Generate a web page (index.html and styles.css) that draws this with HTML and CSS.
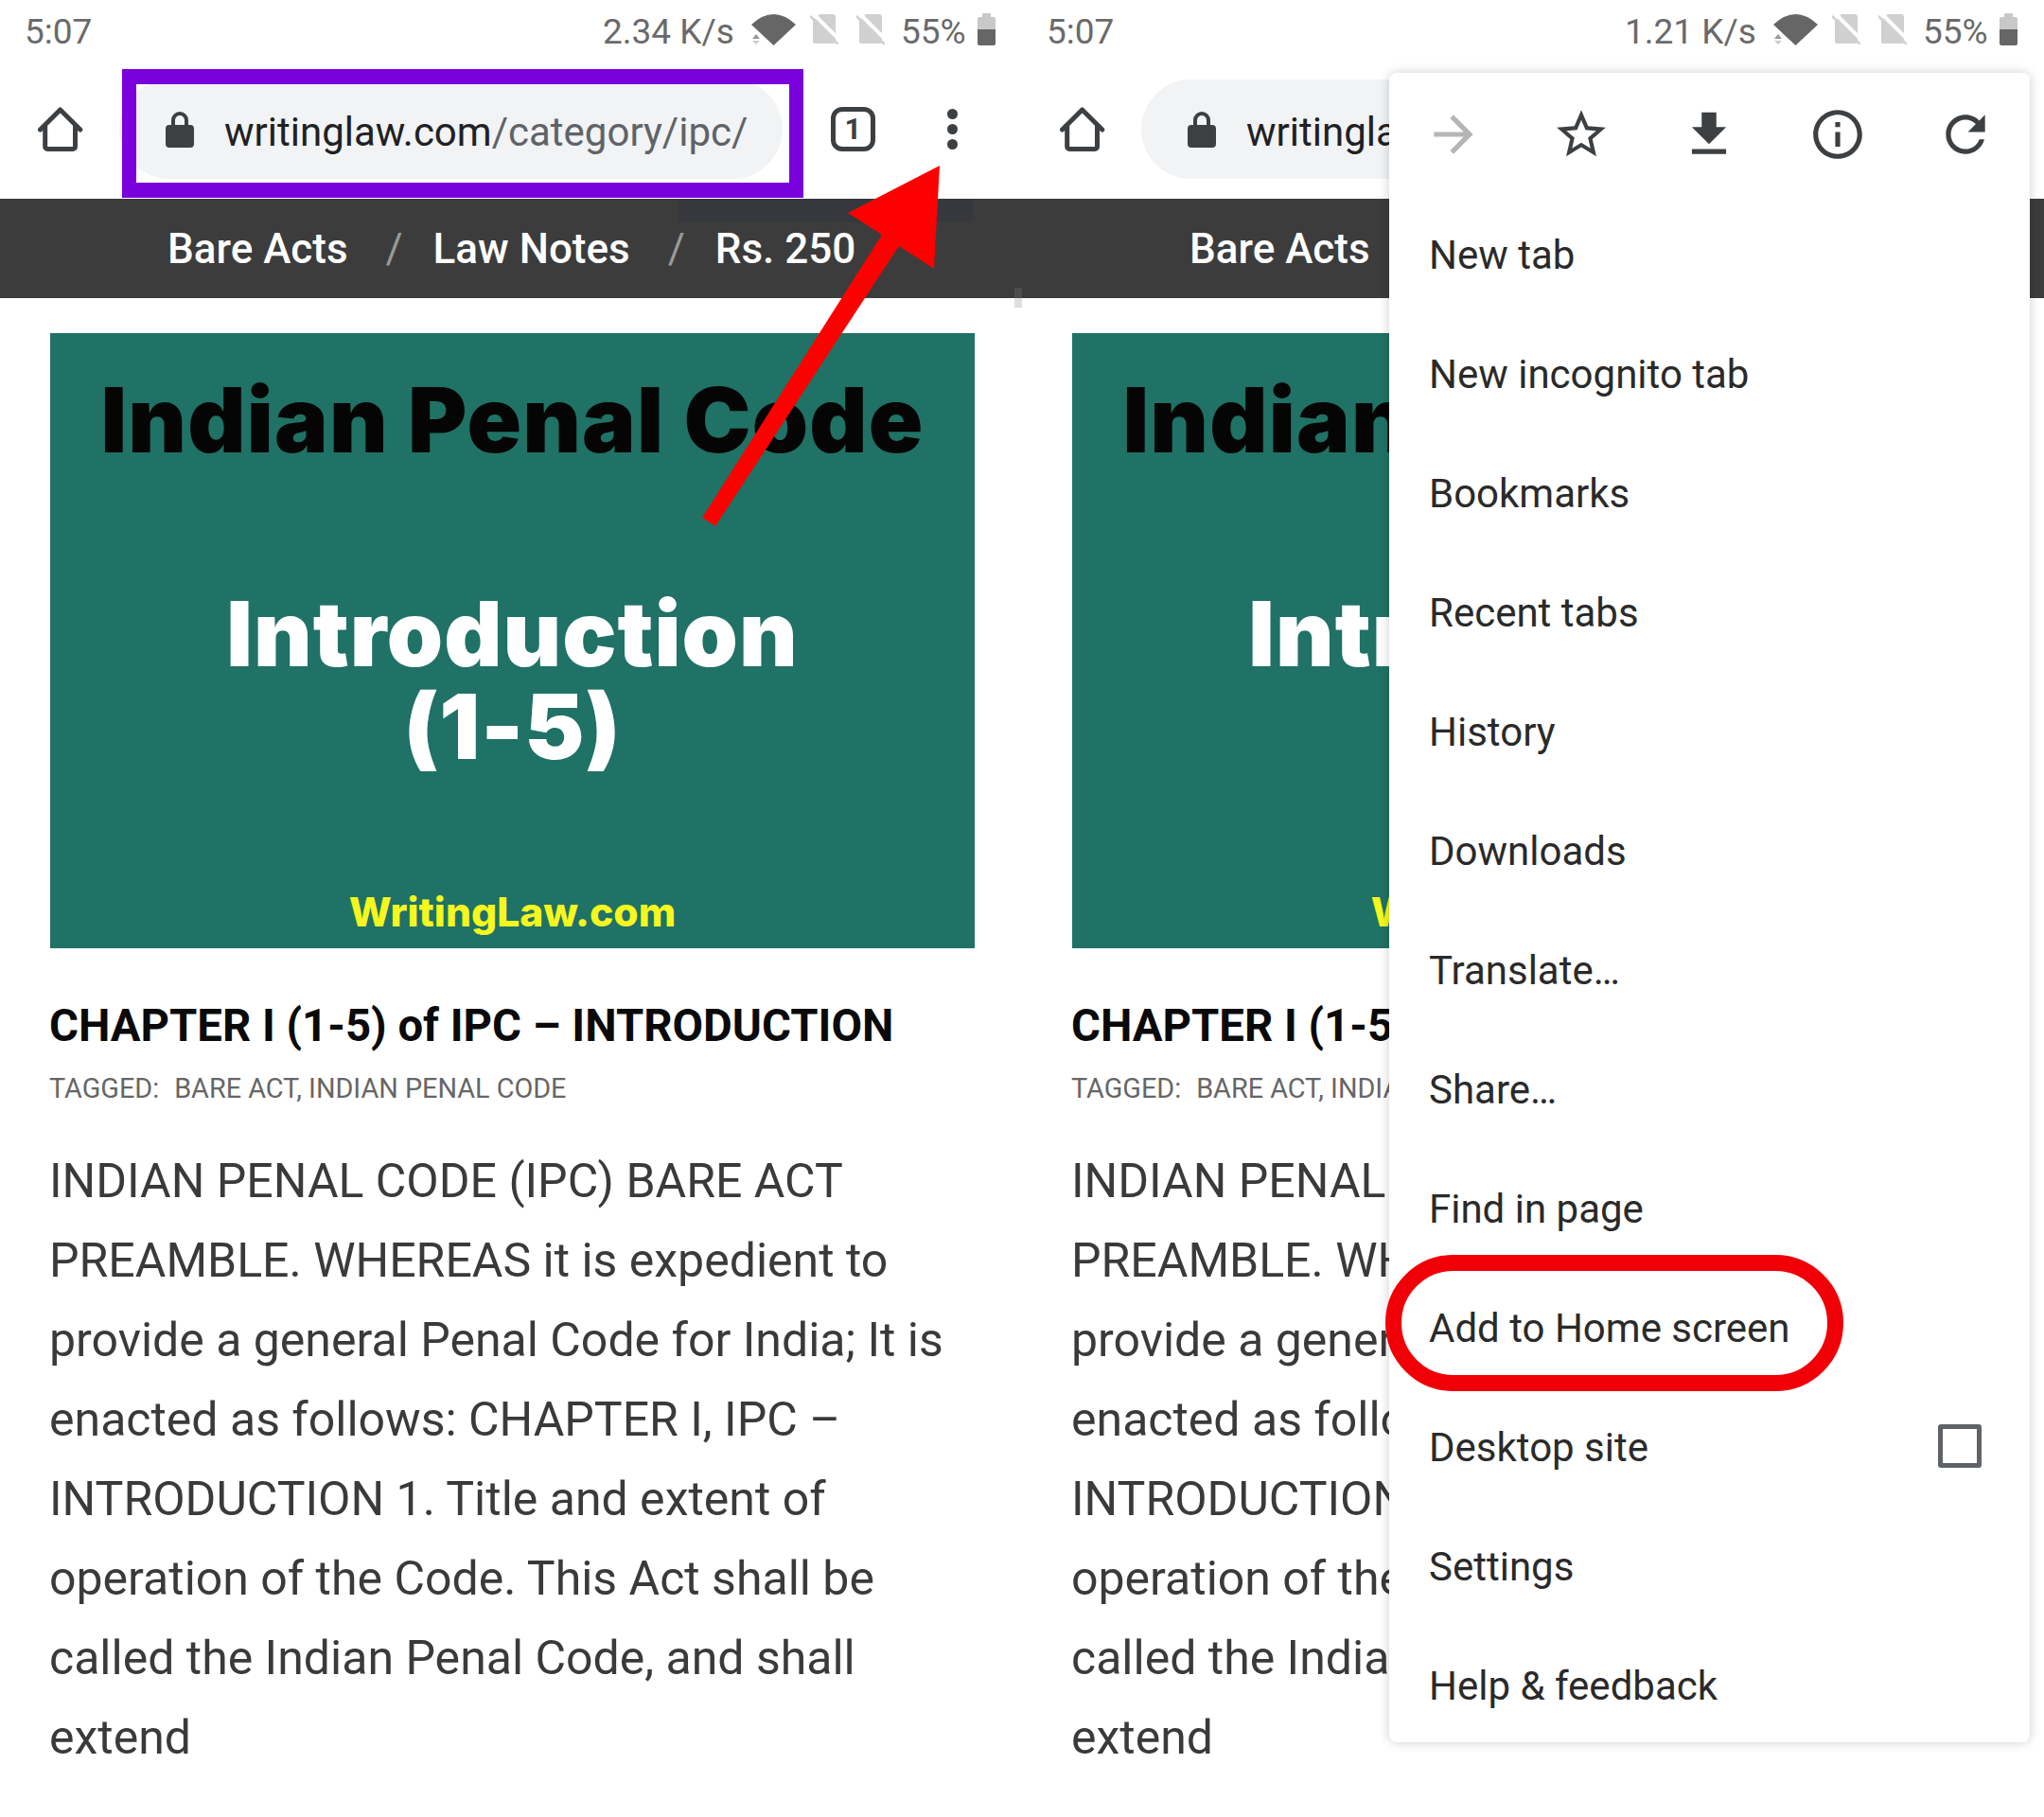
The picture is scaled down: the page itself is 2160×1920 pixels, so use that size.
FILE: index.html
```html
<!DOCTYPE html>
<html lang="en">
<head>
<meta charset="utf-8">
<title>Add to Home screen</title>
<link rel="stylesheet" href="styles.css">
</head>
<body>
<main class="page">
  <section class="screen">
    <header class="status">
      <span class="clock">5:07</span>
      <span class="speed">2.34 K/s</span>
      <svg class="wifi" viewBox="0 0 47 33"><path class="up" d="M5 21l4 5H1z"/><path class="down" d="M1 28h8l-4 4z"/><path d="M0 11Q23.5-11 47 11L23.5 33z"/></svg>
      <svg class="sim" viewBox="0 0 30 32"><path class="simbody" d="M10 0h14a3 3 0 0 1 3 3v26a2 2 0 0 1-2 2H5a2 2 0 0 1-2-2V7z"/><path class="slash-gap" d="M3-1l30 30"/><path class="slash" d="M0 2l30 30"/></svg>
      <svg class="sim" viewBox="0 0 30 32"><path class="simbody" d="M10 0h14a3 3 0 0 1 3 3v26a2 2 0 0 1-2 2H5a2 2 0 0 1-2-2V7z"/><path class="slash-gap" d="M3-1l30 30"/><path class="slash" d="M0 2l30 30"/></svg>
      <span class="pct">55%</span>
      <span class="battery"><i class="battery-cap"></i><i class="battery-top"></i><i class="battery-fill"></i></span>
    </header>
    <div class="toolbar">
      <svg class="home" viewBox="0 0 48 48"><path d="M2.5 24L23.6 3l21.2 21M7.7 19v23a2.5 2.5 0 0 0 2.5 2.5H37a2.5 2.5 0 0 0 2.5-2.5V19"/></svg>
      <div class="pill">
        <svg class="lock" viewBox="0 0 30 38"><path d="M6 14V9a9 9 0 0 1 18 0v5h2a4 4 0 0 1 4 4v16a4 4 0 0 1-4 4H4a4 4 0 0 1-4-4V18a4 4 0 0 1 4-4zm4 0h10V9a5 5 0 0 0-10 0z"/></svg>
        <span class="url"><b class="host">writinglaw.com</b>/category/ipc/</span>
      </div>
      <span class="tabs">1</span>
      <span class="dots"><i></i><i></i><i></i></span>
    </div>
    <nav class="nav">
      <span>Bare Acts</span><em>/</em><span>Law Notes</span><em>/</em><span>Rs. 250</span>
    </nav>
    <article class="post">
      <div class="thumb">
        <h2 class="thumb-title">Indian Penal Code</h2>
        <p class="thumb-intro">Introduction<br>(1-5)</p>
        <p class="thumb-site">WritingLaw.com</p>
      </div>
      <h1 class="title">CHAPTER I (1-5) of IPC – INTRODUCTION</h1>
      <p class="tags"><span class="tag-label">TAGGED:</span>BARE ACT, INDIAN PENAL CODE</p>
      <p class="excerpt">INDIAN PENAL CODE (IPC) BARE ACT PREAMBLE. WHEREAS it is expedient to provide a general Penal Code for India; It is enacted as follows: CHAPTER I, IPC – INTRODUCTION 1. Title and extent of operation of the Code. This Act shall be called the Indian Penal Code, and shall extend</p>
    </article>
  </section>

  <section class="screen">
    <header class="status">
      <span class="clock">5:07</span>
      <span class="speed">1.21 K/s</span>
      <svg class="wifi" viewBox="0 0 47 33"><path class="up" d="M5 21l4 5H1z"/><path class="down" d="M1 28h8l-4 4z"/><path d="M0 11Q23.5-11 47 11L23.5 33z"/></svg>
      <svg class="sim" viewBox="0 0 30 32"><path class="simbody" d="M10 0h14a3 3 0 0 1 3 3v26a2 2 0 0 1-2 2H5a2 2 0 0 1-2-2V7z"/><path class="slash-gap" d="M3-1l30 30"/><path class="slash" d="M0 2l30 30"/></svg>
      <svg class="sim" viewBox="0 0 30 32"><path class="simbody" d="M10 0h14a3 3 0 0 1 3 3v26a2 2 0 0 1-2 2H5a2 2 0 0 1-2-2V7z"/><path class="slash-gap" d="M3-1l30 30"/><path class="slash" d="M0 2l30 30"/></svg>
      <span class="pct">55%</span>
      <span class="battery"><i class="battery-cap"></i><i class="battery-top"></i><i class="battery-fill"></i></span>
    </header>
    <div class="toolbar">
      <svg class="home" viewBox="0 0 48 48"><path d="M2.5 24L23.6 3l21.2 21M7.7 19v23a2.5 2.5 0 0 0 2.5 2.5H37a2.5 2.5 0 0 0 2.5-2.5V19"/></svg>
      <div class="pill">
        <svg class="lock" viewBox="0 0 30 38"><path d="M6 14V9a9 9 0 0 1 18 0v5h2a4 4 0 0 1 4 4v16a4 4 0 0 1-4 4H4a4 4 0 0 1-4-4V18a4 4 0 0 1 4-4zm4 0h10V9a5 5 0 0 0-10 0z"/></svg>
        <span class="url"><b class="host">writinglaw.com</b>/category/ipc/</span>
      </div>
    </div>
    <nav class="nav">
      <span>Bare Acts</span><em>/</em><span>Law Notes</span><em>/</em><span>Rs. 250</span>
    </nav>
    <article class="post">
      <div class="thumb">
        <h2 class="thumb-title">Indian Penal Code</h2>
        <p class="thumb-intro">Introduction<br>(1-5)</p>
        <p class="thumb-site">WritingLaw.com</p>
      </div>
      <h1 class="title">CHAPTER I (1-5) of IPC – INTRODUCTION</h1>
      <p class="tags"><span class="tag-label">TAGGED:</span>BARE ACT, INDIAN PENAL CODE</p>
      <p class="excerpt">INDIAN PENAL CODE (IPC) BARE ACT PREAMBLE. WHEREAS it is expedient to provide a general Penal Code for India; It is enacted as follows: CHAPTER I, IPC – INTRODUCTION 1. Title and extent of operation of the Code. This Act shall be called the Indian Penal Code, and shall extend</p>
    </article>

    <aside class="menu">
      <div class="menu-icons">
        <svg class="mi mi-off" viewBox="0 0 24 24"><path d="M12 4l-1.41 1.41L16.17 11H4v2h12.17l-5.58 5.59L12 20l8-8z"/></svg>
        <svg class="mi" viewBox="0 0 24 24"><path d="M22 9.24l-7.19-.62L12 2 9.19 8.63 2 9.24l5.46 4.73L5.82 21 12 17.27 18.18 21l-1.63-7.03L22 9.24zM12 15.4l-3.76 2.27 1-4.28-3.32-2.88 4.38-.38L12 6.1l1.71 4.04 4.38.38-3.32 2.88 1 4.28L12 15.4z"/></svg>
        <svg class="mi" viewBox="0 0 24 24"><path d="M19 9h-4V3H9v6H5l7 7 7-7zM5 18v2h14v-2H5z"/></svg>
        <svg class="mi" viewBox="0 0 24 24"><path d="M11 7h2v2h-2zm0 4h2v6h-2zm1-9C6.48 2 2 6.48 2 12s4.48 10 10 10 10-4.48 10-10S17.52 2 12 2zm0 18c-4.41 0-8-3.59-8-8s3.59-8 8-8 8 3.59 8 8-3.59 8-8 8z"/></svg>
        <svg class="mi" viewBox="0 0 24 24"><path d="M17.65 6.35C16.2 4.9 14.21 4 12 4c-4.42 0-7.99 3.58-7.99 8s3.57 8 7.99 8c3.73 0 6.84-2.55 7.73-6h-2.08c-.82 2.33-3.04 4-5.65 4-3.31 0-6-2.69-6-6s2.69-6 6-6c1.66 0 3.14.69 4.22 1.78L13 11h7V4l-2.35 2.35z"/></svg>
      </div>
      <ul class="menu-list">
        <li>New tab</li>
        <li>New incognito tab</li>
        <li>Bookmarks</li>
        <li>Recent tabs</li>
        <li>History</li>
        <li>Downloads</li>
        <li>Translate…</li>
        <li>Share…</li>
        <li>Find in page</li>
        <li>Add to Home screen</li>
        <li>Desktop site<span class="check"></span></li>
        <li>Settings</li>
        <li>Help &amp; feedback</li>
      </ul>
    </aside>
  </section>

  <div class="smudge"></div>
  <div class="scroll-mark"></div>
  <div class="box-mark"></div>
  <div class="ring-mark"></div>
  <svg class="arrow-mark" viewBox="0 0 2160 1920"><polygon points="993,175 896,225 932,248 742,547 756,556 950,260 987,284"/></svg>
</main>
</body>
</html>
```

FILE: styles.css
```css
* { box-sizing: border-box; }
html, body { margin: 0; background: #fff; }
body { font-family: Roboto, "Liberation Sans", sans-serif; color: #3c3c3c; }

.page { position: relative; display: flex; width: 2160px; height: 1920px; overflow: hidden; background: #fff; }
.screen { position: relative; width: 1080px; height: 1920px; overflow: hidden; flex: none; }

/* status bar */
.status { display: flex; align-items: center; height: 66px; padding: 0 26px; color: #6a6a6a; font-size: 37px; }
.clock { width: 611px; flex: none; }
.speed { width: 142px; flex: none; white-space: nowrap; }
.wifi { width: 47px; height: 33px; margin: 0 0 4px 15px; fill: #666; flex: none; }
.wifi .up { fill: #999; }
.wifi .down { fill: #ccc; }
.sim { width: 30px; height: 32px; margin: 0 0 4px 15px; flex: none; }
.sim + .sim { margin-left: 19px; }
.simbody { fill: #d0d0d0; }
.slash-gap { stroke: #fff; stroke-width: 4; fill: none; }
.slash { stroke: #d0d0d0; stroke-width: 2.5; fill: none; }
.pct { margin-left: 17px; width: 68px; flex: none; }
.battery { display: flex; flex-direction: column; align-items: center; flex: none; width: 19px; height: 34px; margin: 0 0 4px 13px; }
.battery i { display: block; flex: none; }
.battery-cap { width: 9px; height: 4px; background: #c8c8c8; border-radius: 1px 1px 0 0; }
.battery-top { width: 19px; height: 13px; background: #c8c8c8; border-radius: 2px 2px 0 0; }
.battery-fill { width: 19px; height: 17px; background: #666; border-radius: 0 0 2px 2px; }

/* toolbar */
.toolbar { display: flex; align-items: center; height: 144px; padding: 0 0 3px 40px; }
.home { width: 48px; height: 48px; fill: none; stroke: #3c4043; stroke-width: 5; stroke-linecap: round; stroke-linejoin: round; flex: none; }
.pill { display: flex; align-items: center; flex: none; width: 701px; height: 105px; margin-left: 38px; padding-left: 49px; border-radius: 53px; background: #f1f3f4; }
.lock { width: 30px; height: 38px; fill: #3c4043; flex: none; }
.url { margin: 5px 0 0 32px; font-size: 42px; color: #5f6368; white-space: nowrap; }
.host { font-weight: 400; color: #202124; }
.tabs { display: flex; align-items: center; justify-content: center; flex: none; width: 47px; height: 47px; margin-left: 51px; border: 5px solid #3c4043; border-radius: 12px; font-size: 31px; font-weight: 700; color: #3c4043; }
.dots { display: flex; flex-direction: column; gap: 5px; flex: none; margin-left: 76px; }
.dots i { display: block; width: 11px; height: 11px; border-radius: 50%; background: #3c4043; }

/* site nav */
.nav { display: flex; align-items: center; height: 105px; padding-left: 177px; background: #3c3c3c; color: #fff; font-size: 44px; font-weight: 500; }
.nav em { width: 90px; padding-left: 8px; text-align: center; font-style: normal; font-weight: 400; color: #999; }

/* post */
.post { padding: 37px 50px 0 53px; }
.thumb { display: flex; flex-direction: column; align-items: center; height: 650px; background: #1f7265; font-family: Inter, Lato, sans-serif; font-weight: 900; }
.thumb-title { margin: 42px 0 0; font-size: 95px; line-height: 100px; font-weight: 900; color: #050505; white-space: nowrap; letter-spacing: 1.2px; }
.thumb-intro { margin: 127px 0 0; font-size: 95px; line-height: 98px; font-weight: 900; color: #fff; text-align: center; letter-spacing: 1px; }
.thumb-site { margin: 122px 0 0; font-size: 42.6px; line-height: 50px; font-weight: 800; color: #f5f71f; }
.title { margin: 53px 0 0 -1px; font-size: 47.3px; line-height: 58px; font-weight: 700; color: #0a0a0a; white-space: nowrap; }
.tags { margin: 19px 0 0 -1px; font-size: 28.8px; line-height: 36px; color: #666; white-space: nowrap; }
.tag-label { margin-right: 16px; }
.excerpt { margin: 38px 0 0 -1px; font-size: 50px; line-height: 84px; color: #3a3a3a; }

/* chrome menu */
.menu { position: absolute; left: 388px; top: 77px; width: 677px; height: 1764px; border-radius: 8px; background: #fff; box-shadow: 0 0 12px rgba(0,0,0,.2); }
.menu-icons { display: grid; grid-template-columns: repeat(5, 135.4px); justify-items: center; align-items: center; height: 129px; }
.mi { width: 62px; height: 62px; fill: #3c4043; }
.mi-off { fill: #b5b5b5; }
.menu-list { margin: 0; padding: 0; list-style: none; }
.menu-list li { display: flex; align-items: center; justify-content: space-between; height: 126px; padding: 0 51px 0 42px; font-size: 42px; color: #2a2a2a; }
.menu-list li:last-child { height: 120px; padding-top: 6px; }
.check { width: 46px; height: 46px; margin-bottom: 3px; border: 5px solid #5f6368; border-radius: 3px; }

/* annotations */
.smudge { position: absolute; left: 717px; top: 210px; width: 311px; height: 25px; background: #36383e; }
.scroll-mark { position: absolute; left: 1072px; top: 304px; width: 8px; height: 21px; background: rgba(128,128,128,.25); }
.box-mark { position: absolute; left: 129px; top: 73px; width: 720px; height: 136px; border: solid #7a00dc; border-width: 16px 15px; }
.ring-mark { position: absolute; left: 1464px; top: 1326px; width: 484px; height: 144px; border: 17px solid #f00006; border-radius: 72px; }
.arrow-mark { position: absolute; left: 0; top: 0; width: 2160px; height: 1920px; fill: #fd0000; pointer-events: none; }
```
